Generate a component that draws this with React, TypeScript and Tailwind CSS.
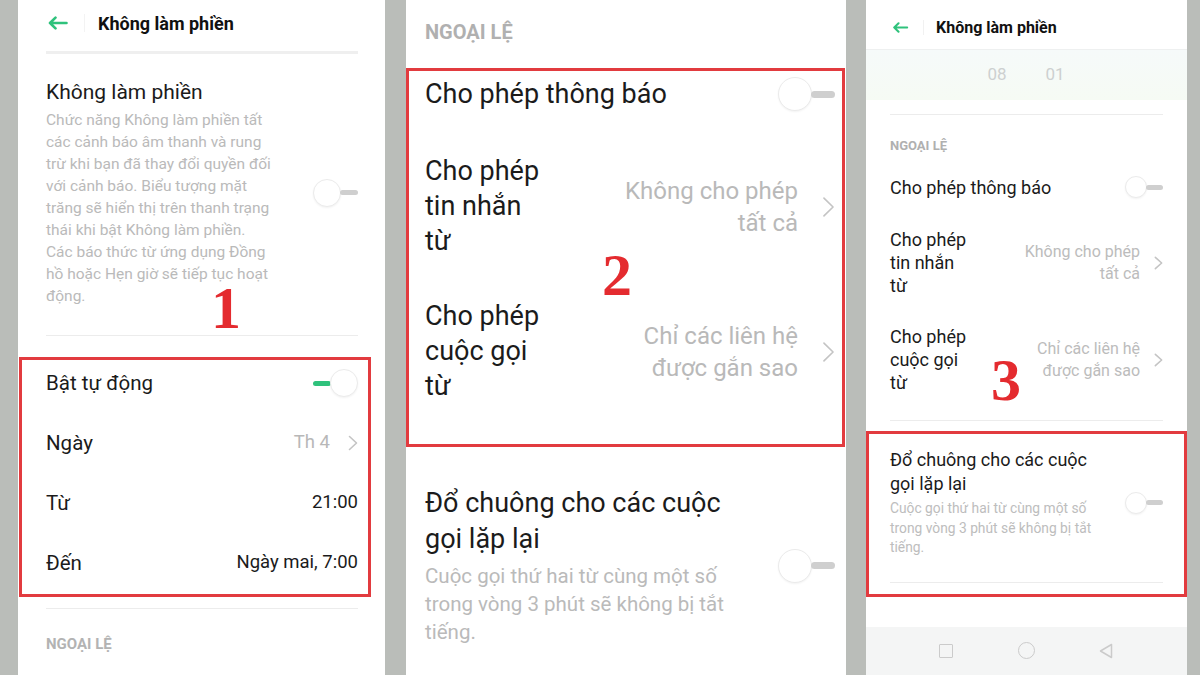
import React from "react";

type Size = "sm" | "md" | "lg";

const knobSize: Record<Size, string> = {
  sm: "h-[22px] w-[22px]",
  md: "h-[28px] w-[28px]",
  lg: "h-[34px] w-[34px]",
};
const barSize: Record<Size, string> = {
  sm: "h-[5px] w-[17px]",
  md: "h-[5px] w-[18px]",
  lg: "h-[7px] w-[24px]",
};
const chevSize: Record<Size, string> = {
  sm: "h-[14px] w-[9px]",
  md: "h-[16px] w-[10px]",
  lg: "h-[22px] w-[13px]",
};

function Toggle({ size, on = false }: { size: Size; on?: boolean }) {
  const knob = (
    <div
      className={`${knobSize[size]} shrink-0 rounded-full border border-[#ebebeb] bg-white shadow-[0_1px_2px_rgba(0,0,0,0.05)]`}
    />
  );
  if (on) {
    return (
      <div className="flex shrink-0 items-center">
        <div className={`${barSize[size]} -mr-px rounded-full bg-[#2fc27c]`} />
        {knob}
      </div>
    );
  }
  return (
    <div className="flex shrink-0 items-center">
      {knob}
      <div className={`${barSize[size]} -ml-px rounded-full bg-[#cfcfcf]`} />
    </div>
  );
}

function Chevron({ size, className = "" }: { size: Size; className?: string }) {
  return (
    <svg
      viewBox="0 0 10 16"
      preserveAspectRatio="none"
      className={`${chevSize[size]} shrink-0 ${className}`}
      fill="none"
      stroke="#c4c4c4"
      strokeWidth={1.6}
      strokeLinecap="round"
      strokeLinejoin="round"
    >
      <polyline points="1.5,1.5 8.5,8 1.5,14.5" vectorEffect="non-scaling-stroke" />
    </svg>
  );
}

function BackArrow({ className }: { className: string }) {
  return (
    <svg viewBox="0 0 20 14" className={className} fill="none" stroke="#2fc27c" strokeWidth={2.6} strokeLinecap="round" strokeLinejoin="round">
      <path d="M18.5 7H2M7.5 1.6 2 7l5.5 5.4" />
    </svg>
  );
}

// red annotation digits over each screenshot
function Marker({ n, className }: { n: string; className: string }) {
  return (
    <span
      className={`absolute font-['Liberation_Serif',serif] text-[60px] font-bold leading-[44px] text-[#e42b2f] ${className}`}
    >
      {n}
    </span>
  );
}

const dndDesc = [
  "Chức năng Không làm phiền tất",
  "các cảnh báo âm thanh và rung",
  "trừ khi bạn đã thay đổi quyền đối",
  "với cảnh báo. Biểu tượng mặt",
  "trăng sẽ hiển thị trên thanh trạng",
  "thái khi bật Không làm phiền.",
  "Các báo thức từ ứng dụng Đồng",
  "hồ hoặc Hẹn giờ sẽ tiếp tục hoạt",
  "động.",
];

const repeatDesc = ["Cuộc gọi thứ hai từ cùng một số", "trong vòng 3 phút sẽ không bị tắt", "tiếng."];

function Lines({ lines }: { lines: string[] }) {
  return (
    <>
      {lines.map((l) => (
        <div key={l} className="whitespace-nowrap">
          {l}
        </div>
      ))}
    </>
  );
}

function PanelOne() {
  const rows = [
    { label: "Ngày", value: "Th 4", muted: true },
    { label: "Từ", value: "21:00" },
    { label: "Đến", value: "Ngày mai, 7:00" },
  ];
  return (
    <div className="relative h-[675px] w-[367px] shrink-0 overflow-hidden bg-white">
      <div className="flex h-[46px] items-center pl-[30px]">
        <BackArrow className="h-[14px] w-[20px]" />
        <div className="ml-[16px] h-[18px] w-px bg-[#f3f3f3]" />
        <span className="ml-[13px] text-[18px] font-bold text-[#111]">Không làm phiền</span>
      </div>
      <div className="pl-[28px] pr-[27px]">
        <div className="mt-[5px] h-[3px] bg-[#efefef]" />
        <div className="mt-[24px] flex items-center justify-between">
          <div>
            <div className="text-[21px] leading-[28px]">Không làm phiền</div>
            <div className="mt-[3px] text-[15.5px] leading-[22px] text-[#bababa]">
              <Lines lines={dndDesc} />
            </div>
          </div>
          <Toggle size="md" />
        </div>
        <div className="mt-[28px] h-px bg-[#ececec]" />
        <div className="-ml-[27px] -mr-[13px] mt-[21px] border-[3px] border-[#e23b3f] pb-[1px] pl-[24px] pr-[10px] text-[20.5px]">
          <div className="flex h-[46px] items-center justify-between">
            <span>Bật tự động</span>
            <Toggle size="md" on />
          </div>
          <div className="mt-[7px]">
            {rows.map((r) => (
              <div key={r.label} className="flex h-[60px] items-center">
                <span>{r.label}</span>
                {r.muted ? (
                  <>
                    <span className="ml-auto text-[18.5px] text-[#b8b8b8]">{r.value}</span>
                    <Chevron size="md" className="ml-[18px]" />
                  </>
                ) : (
                  <span className="ml-auto text-[18.5px]">{r.value}</span>
                )}
              </div>
            ))}
          </div>
        </div>
        <div className="mt-[11px] h-px bg-[#ececec]" />
        <div className="mt-[25px] text-[15px] font-bold leading-[20px] text-[#b3b3b3]">NGOẠI LỆ</div>
      </div>
      <Marker n="1" className="left-[193px] top-[286px]" />
    </div>
  );
}

function PanelTwo() {
  return (
    <div className="relative ml-[21px] h-[675px] w-[440px] shrink-0 overflow-hidden bg-white">
      <div className="pl-[19px] pr-[11px] pt-[19px]">
        <div className="text-[20px] font-bold leading-[26px] text-[#b0b0b0]">NGOẠI LỆ</div>
        <div className="-ml-[19px] -mr-[10px] mt-[23px] border-[3px] border-[#e23b3f] pb-[40px] pl-[16px] pr-[7px] text-[27px]">
          <div className="flex h-[46px] items-center justify-between">
            <span>Cho phép thông báo</span>
            <Toggle size="lg" />
          </div>
          <div className="mt-[37px] flex items-center">
            <div className="leading-[35px]">
              Cho phép
              <br />
              tin nhắn
              <br />
              từ
            </div>
            <div className="ml-auto text-right text-[24px] leading-[32px] text-[#b9b9b9]">
              Không cho phép
              <br />
              tất cả
            </div>
            <Chevron size="lg" className="ml-[24px]" />
          </div>
          <div className="mt-[40px] flex items-center">
            <div className="leading-[35px]">
              Cho phép
              <br />
              cuộc gọi
              <br />
              từ
            </div>
            <div className="ml-auto text-right text-[24px] leading-[32px] text-[#b9b9b9]">
              Chỉ các liên hệ
              <br />
              được gắn sao
            </div>
            <Chevron size="lg" className="ml-[24px]" />
          </div>
        </div>
        <div className="mt-[38px] flex items-center justify-between">
          <div>
            <div className="text-[27px] leading-[36px]">
              Đổ chuông cho các cuộc
              <br />
              gọi lặp lại
            </div>
            <div className="mt-[5px] text-[20.5px] leading-[28px] text-[#bababa]">
              <Lines lines={repeatDesc} />
            </div>
          </div>
          <Toggle size="lg" />
        </div>
      </div>
      <Marker n="2" className="left-[196px] top-[253px]" />
    </div>
  );
}

function PanelThree() {
  return (
    <div className="relative ml-[20px] h-[675px] w-[321px] shrink-0 overflow-hidden bg-white">
      <div className="flex h-[50px] items-center border-b border-[#eef0f0] pl-[26px] pt-[6px]">
        <BackArrow className="h-[11px] w-[17px]" />
        <div className="ml-[14px] h-[15px] w-px bg-[#f1f1f1]" />
        <span className="ml-[12px] text-[16px] font-bold text-[#111]">Không làm phiền</span>
      </div>
      <div className="flex h-[50px] items-center bg-gradient-to-b from-[#f6fafa] to-[#f6fbf4] pl-[121px] text-[17px] text-[#cdd0d0]">
        <span className="w-[20px] text-center">08</span>
        <span className="ml-[38px] w-[20px] text-center">01</span>
      </div>
      <div className="px-[24px] text-[18px]">
        <div className="mt-[14px] h-px bg-[#ececec]" />
        <div className="mt-[22px] text-[13px] font-bold leading-[18px] text-[#b0b0b0]">NGOẠI LỆ</div>
        <div className="mt-[17px] flex h-[30px] items-center justify-between">
          <span>Cho phép thông báo</span>
          <Toggle size="sm" />
        </div>
        <div className="mt-[26px] flex items-center">
          <div className="leading-[23px]">
            Cho phép
            <br />
            tin nhắn
            <br />
            từ
          </div>
          <div className="ml-auto text-right text-[16px] leading-[22px] text-[#bcbcbc]">
            Không cho phép
            <br />
            tất cả
          </div>
          <Chevron size="sm" className="ml-[14px]" />
        </div>
        <div className="mt-[28px] flex items-center">
          <div className="leading-[23px]">
            Cho phép
            <br />
            cuộc gọi
            <br />
            từ
          </div>
          <div className="ml-auto text-right text-[16px] leading-[22px] text-[#bcbcbc]">
            Chỉ các liên hệ
            <br />
            được gắn sao
          </div>
          <Chevron size="sm" className="ml-[14px]" />
        </div>
        <div className="mt-[26px] h-px bg-[#ececec]" />
        <div className="-mx-[24px] mt-[10px] border-[3px] border-[#e23b3f] px-[21px] pb-[11px] pt-[14px]">
          <div className="flex items-center justify-between">
            <div>
              <div className="leading-[24px]">
                Đổ chuông cho các cuộc
                <br />
                gọi lặp lại
              </div>
              <div className="mt-[3px] text-[13.8px] leading-[19.5px] text-[#bdbdbd]">
                <Lines lines={repeatDesc} />
              </div>
            </div>
            <Toggle size="sm" />
          </div>
          <div className="mt-[24px] h-px bg-[#ececec]" />
        </div>
      </div>
      <div className="mt-[30px] flex h-[48px] items-center bg-[#f4f5f5] pl-[40px]">
        <div className="flex w-[80px] justify-center">
          <div className="h-[14px] w-[14px] rounded-[1px] border-[1.5px] border-[#cbcbcb]" />
        </div>
        <div className="flex w-[80px] justify-center">
          <div className="h-[17px] w-[17px] rounded-full border-[1.5px] border-[#cbcbcb]" />
        </div>
        <div className="flex w-[80px] justify-center">
          <svg viewBox="0 0 14 16" className="h-[16px] w-[14px]" fill="none" stroke="#cbcbcb" strokeWidth={1.5} strokeLinejoin="round">
            <path d="M12.5 1.5v13L1.5 8z" />
          </svg>
        </div>
      </div>
      <Marker n="3" className="left-[125px] top-[358px]" />
    </div>
  );
}

export default function App() {
  return (
    <div className="flex h-[675px] w-[1200px] overflow-hidden bg-[#babdb9] pl-[18px] font-['Roboto',sans-serif] text-[#1b1b1b]">
      <PanelOne />
      <PanelTwo />
      <PanelThree />
    </div>
  );
}
